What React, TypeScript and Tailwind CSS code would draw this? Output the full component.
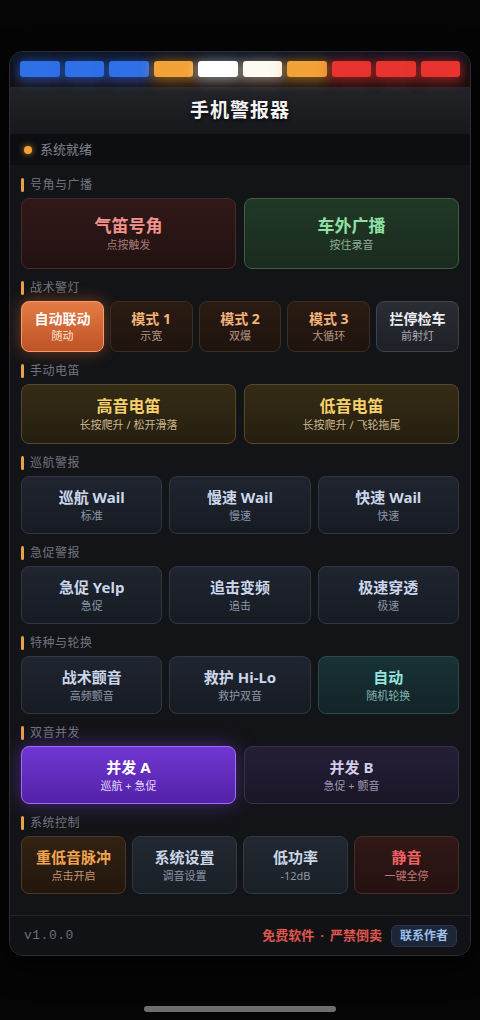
import React from 'react'

const FONT = "'Noto Sans', 'Noto Sans CJK SC', sans-serif"

// 按钮配色
const tones: Record<string, { box: string; title: string; sub: string }> = {
  red: {
    box: 'bg-gradient-to-b from-[#311818] to-[#221111] border-[#4b2828]',
    title: 'text-[#f2938c]',
    sub: 'text-[#a87b77]',
  },
  green: {
    box: 'bg-gradient-to-b from-[#213826] to-[#1a2b1e] border-[#3b5e44]',
    title: 'text-[#8fe0a4]',
    sub: 'text-[#8cae95]',
  },
  orangeOn: {
    box: 'bg-gradient-to-b from-[#e57b43] to-[#bd5327] border-[#f49c6e] shadow-[0_0_16px_rgba(230,110,50,0.45)]',
    title: 'text-white',
    sub: 'text-[#ffe2cf]',
  },
  brown: {
    box: 'bg-gradient-to-b from-[#2b1c13] to-[#1d130d] border-[#3e2d21]',
    title: 'text-[#f2b27a]',
    sub: 'text-[#b39583]',
  },
  gray: {
    box: 'bg-gradient-to-b from-[#2a2d34] to-[#1e2026] border-[#3f424b]',
    title: 'text-[#eef0f4]',
    sub: 'text-[#a7abb5]',
  },
  gold: {
    box: 'bg-gradient-to-b from-[#352c15] to-[#251e0f] border-[#55482b]',
    title: 'text-[#f6d06a]',
    sub: 'text-[#cbb88e]',
  },
  navy: {
    box: 'bg-gradient-to-b from-[#1f2530] to-[#161b23] border-[#2f3745]',
    title: 'text-[#cbd6ea]',
    sub: 'text-[#8c96a8]',
  },
  teal: {
    box: 'bg-gradient-to-b from-[#183236] to-[#122427] border-[#294a4e]',
    title: 'text-[#93e3df]',
    sub: 'text-[#82b3b3]',
  },
  purpleOn: {
    box: 'bg-gradient-to-b from-[#7036d2] to-[#5322a6] border-[#9d6ff3] shadow-[0_0_20px_rgba(120,60,220,0.5)]',
    title: 'text-white',
    sub: 'text-[#e3d6ff]',
  },
  purple: {
    box: 'bg-gradient-to-b from-[#251f36] to-[#1a1627] border-[#372f4b]',
    title: 'text-[#d2cbe9]',
    sub: 'text-[#9c96b2]',
  },
  amber: {
    box: 'bg-gradient-to-b from-[#312213] to-[#22170d] border-[#4e3721]',
    title: 'text-[#f3a451]',
    sub: 'text-[#c39573]',
  },
  slate: {
    box: 'bg-gradient-to-b from-[#212831] to-[#192027] border-[#313947]',
    title: 'text-[#cad6e6]',
    sub: 'text-[#8c96a6]',
  },
  mute: {
    box: 'bg-gradient-to-b from-[#301816] to-[#231110] border-[#4b2927]',
    title: 'text-[#f26262]',
    sub: 'text-[#c27474]',
  },
}

type Btn = { title: string; sub: string; tone: string }

function Key({ b, size, h }: { b: Btn; size: string; h: string }) {
  const t = tones[b.tone]
  return (
    <div
      className={`flex flex-1 flex-col items-center justify-center rounded-[8px] border ${h} ${t.box}`}
    >
      <span className={`font-bold leading-tight ${size} ${t.title}`}>{b.title}</span>
      <span className={`mt-[2px] text-[11px] leading-tight ${t.sub}`}>{b.sub}</span>
    </div>
  )
}

function Section({
  label,
  items,
  size,
  h,
  gap,
}: {
  label: string
  items: Btn[]
  size: string
  h: string
  gap: string
}) {
  return (
    <div>
      <div className="flex h-[14px] items-center gap-[6px]">
        <div className="h-[14px] w-[3px] rounded-full bg-[#e9a04b]" />
        <span className="text-[12px] tracking-[0.5px] text-[#71757f]">{label}</span>
      </div>
      <div className={`mt-[6px] flex ${gap}`}>
        {items.map((b) => (
          <Key key={b.title} b={b} size={size} h={h} />
        ))}
      </div>
    </div>
  )
}

const lights = [
  'bg-[#2f6fe8] shadow-[0_2px_12px_3px_rgba(47,111,232,0.55)]',
  'bg-[#2f6fe8] shadow-[0_2px_12px_3px_rgba(47,111,232,0.55)]',
  'bg-[#2f6fe8] shadow-[0_2px_12px_3px_rgba(47,111,232,0.55)]',
  'bg-[#f2a236] shadow-[0_2px_12px_3px_rgba(242,162,54,0.5)]',
  'bg-white shadow-[0_2px_12px_3px_rgba(255,255,255,0.45)]',
  'bg-[#fdfaf2] shadow-[0_2px_12px_3px_rgba(255,240,210,0.45)]',
  'bg-[#f2a236] shadow-[0_2px_12px_3px_rgba(242,162,54,0.5)]',
  'bg-[#e8332e] shadow-[0_2px_12px_3px_rgba(232,51,46,0.55)]',
  'bg-[#e8332e] shadow-[0_2px_12px_3px_rgba(232,51,46,0.55)]',
  'bg-[#e8332e] shadow-[0_2px_12px_3px_rgba(232,51,46,0.55)]',
]

export default function App() {
  return (
    <div
      className="flex min-h-[1020px] w-full flex-col items-center bg-[#050505] pt-[51px]"
      style={{ fontFamily: FONT }}
    >
      <div className="w-[462px] overflow-hidden rounded-[14px] border border-[#2c2f35] bg-[#131417] shadow-[0_10px_30px_rgba(0,0,0,0.8)]">
        {/* 警灯条 */}
        <div className="flex gap-[5px] bg-gradient-to-b from-[#0d1424] via-[#0b0c10] to-[#1a0d0e] px-[10px] pb-[10px] pt-[9px]">
          {lights.map((c, i) => (
            <div key={i} className={`h-[16px] flex-1 rounded-[3px] ${c}`} />
          ))}
        </div>

        {/* 标题 */}
        <div className="flex h-[47px] items-center justify-center bg-gradient-to-b from-[#222428] to-[#17181b]">
          <h1 className="text-[19px] font-bold tracking-[1px] text-[#f3f3f5] [text-shadow:0_2px_4px_rgba(0,0,0,0.8)]">
            手机警报器
          </h1>
        </div>

        {/* 状态 */}
        <div className="flex h-[31px] items-center gap-[8px] bg-[#0d0e11] pl-[14px]">
          <div className="h-[8px] w-[8px] rounded-full bg-[#f2a236] shadow-[0_0_6px_rgba(242,162,54,0.8)]" />
          <span className="text-[13px] text-[#80848e]">系统就绪</span>
        </div>

        <div className="flex flex-col gap-[12px] px-[11px] pb-[21px] pt-[13px]">
          <Section
            label="号角与广播"
            size="text-[17px]"
            h="h-[71px]"
            gap="gap-[8px]"
            items={[
              { title: '气笛号角', sub: '点按触发', tone: 'red' },
              { title: '车外广播', sub: '按住录音', tone: 'green' },
            ]}
          />
          <Section
            label="战术警灯"
            size="text-[14px]"
            h="h-[51px]"
            gap="gap-[6px]"
            items={[
              { title: '自动联动', sub: '随动', tone: 'orangeOn' },
              { title: '模式 1', sub: '示宽', tone: 'brown' },
              { title: '模式 2', sub: '双爆', tone: 'brown' },
              { title: '模式 3', sub: '大循环', tone: 'brown' },
              { title: '拦停检车', sub: '前射灯', tone: 'gray' },
            ]}
          />
          <Section
            label="手动电笛"
            size="text-[16px]"
            h="h-[60px]"
            gap="gap-[8px]"
            items={[
              { title: '高音电笛', sub: '长按爬升 / 松开滑落', tone: 'gold' },
              { title: '低音电笛', sub: '长按爬升 / 飞轮拖尾', tone: 'gold' },
            ]}
          />
          <Section
            label="巡航警报"
            size="text-[15px]"
            h="h-[58px]"
            gap="gap-[7px]"
            items={[
              { title: '巡航 Wail', sub: '标准', tone: 'navy' },
              { title: '慢速 Wail', sub: '慢速', tone: 'navy' },
              { title: '快速 Wail', sub: '快速', tone: 'navy' },
            ]}
          />
          <Section
            label="急促警报"
            size="text-[15px]"
            h="h-[58px]"
            gap="gap-[7px]"
            items={[
              { title: '急促 Yelp', sub: '急促', tone: 'navy' },
              { title: '追击变频', sub: '追击', tone: 'navy' },
              { title: '极速穿透', sub: '极速', tone: 'navy' },
            ]}
          />
          <Section
            label="特种与轮换"
            size="text-[15px]"
            h="h-[58px]"
            gap="gap-[7px]"
            items={[
              { title: '战术颤音', sub: '高频颤音', tone: 'navy' },
              { title: '救护 Hi-Lo', sub: '救护双音', tone: 'navy' },
              { title: '自动', sub: '随机轮换', tone: 'teal' },
            ]}
          />
          <Section
            label="双音并发"
            size="text-[15px]"
            h="h-[58px]"
            gap="gap-[8px]"
            items={[
              { title: '并发 A', sub: '巡航 + 急促', tone: 'purpleOn' },
              { title: '并发 B', sub: '急促 + 颤音', tone: 'purple' },
            ]}
          />
          <Section
            label="系统控制"
            size="text-[15px]"
            h="h-[58px]"
            gap="gap-[6px]"
            items={[
              { title: '重低音脉冲', sub: '点击开启', tone: 'amber' },
              { title: '系统设置', sub: '调音设置', tone: 'slate' },
              { title: '低功率', sub: '-12dB', tone: 'slate' },
              { title: '静音', sub: '一键全停', tone: 'mute' },
            ]}
          />
        </div>

        {/* 底部 */}
        <div className="flex h-[40px] items-center justify-between border-t border-[#24262b] bg-[#111215] pl-[14px] pr-[13px]">
          <span
            className="text-[13px] tracking-[0.5px] text-[#6b6f78]"
            style={{ fontFamily: "'Liberation Mono', monospace" }}
          >
            v1.0.0
          </span>
          <div className="flex items-center gap-[9px]">
            <span className="flex items-center text-[13px] font-bold text-[#e0564e]">
              免费软件
              <span className="mx-[6px]">·</span>
              严禁倒卖
            </span>
            <span className="flex h-[22px] items-center rounded-[6px] border border-[#2b364a] bg-[#1c2636] px-[8px] text-[12px] font-bold text-[#9cc0ef]">
              联系作者
            </span>
          </div>
        </div>
      </div>

      <div className="mt-[50px] h-[6px] w-[192px] rounded-full bg-[#6e6e6e]" />
    </div>
  )
}
